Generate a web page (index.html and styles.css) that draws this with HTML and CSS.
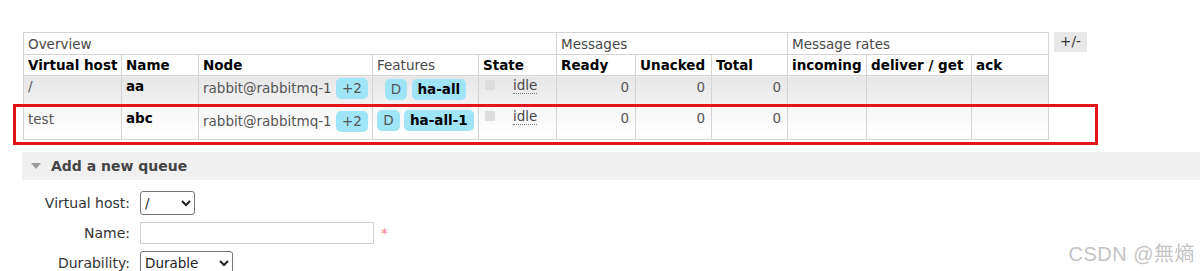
FILE: index.html
```html
<!DOCTYPE html>
<html lang="en">
<head>
    <meta charset="UTF-8">
    <title>Queues</title>
    <link rel="stylesheet" href="styles.css">
</head>
<body>
    <div class="list-wrap">
        <table class="list">
            <colgroup>
                <col style="width:98px"><col style="width:77px"><col style="width:174px">
                <col style="width:106px"><col style="width:78px"><col style="width:79px">
                <col style="width:76px"><col style="width:76px"><col style="width:79px">
                <col style="width:105px"><col style="width:77px">
            </colgroup>
            <thead>
                <tr class="group">
                    <th colspan="5">Overview</th>
                    <th colspan="3">Messages</th>
                    <th colspan="3">Message rates</th>
                </tr>
                <tr class="cols">
                    <th>Virtual host</th>
                    <th>Name</th>
                    <th>Node</th>
                    <th class="plain">Features</th>
                    <th>State</th>
                    <th>Ready</th>
                    <th>Unacked</th>
                    <th>Total</th>
                    <th>incoming</th>
                    <th>deliver / get</th>
                    <th>ack</th>
                </tr>
            </thead>
            <tbody>
                <tr class="alt1">
                    <td class="muted">/</td>
                    <td class="qname">aa</td>
                    <td class="muted">rabbit@rabbitmq-1 <span class="badge">+2</span></td>
                    <td class="features"><span class="badge">D</span> <span class="badge policy">ha-all</span></td>
                    <td class="state"><span class="sq"></span><abbr>idle</abbr></td>
                    <td class="num">0</td>
                    <td class="num">0</td>
                    <td class="num">0</td>
                    <td></td>
                    <td></td>
                    <td></td>
                </tr>
                <tr class="alt2">
                    <td class="muted">test</td>
                    <td class="qname">abc</td>
                    <td class="muted">rabbit@rabbitmq-1 <span class="badge">+2</span></td>
                    <td class="features"><span class="badge">D</span> <span class="badge policy">ha-all-1</span></td>
                    <td class="state"><span class="sq"></span><abbr>idle</abbr></td>
                    <td class="num">0</td>
                    <td class="num">0</td>
                    <td class="num">0</td>
                    <td></td>
                    <td></td>
                    <td></td>
                </tr>
            </tbody>
        </table>
        <span class="toggle">+/-</span>
        <div class="highlight"></div>
    </div>

    <div class="section">
        <h2><span class="arrow"></span>Add a new queue</h2>
        <div class="form">
            <div class="form-row">
                <label>Virtual host:</label>
                <select class="sel-vhost"><option>/</option></select>
            </div>
            <div class="form-row">
                <label>Name:</label>
                <input type="text" class="name-input">
                <span class="req">*</span>
            </div>
            <div class="form-row">
                <label>Durability:</label>
                <select class="sel-durable"><option>Durable</option></select>
            </div>
        </div>
    </div>

    <div class="watermark">CSDN @無熵</div>
</body>
</html>
```

FILE: styles.css
```css
body {
    margin: 0;
    font-family: "DejaVu Sans", Verdana, sans-serif;
    font-size: 13.5px;
    color: #484848;
    background: #fff;
    height: 271px;
    overflow: hidden;
    position: relative;
}
.list-wrap {
    position: relative;
    display: flex;
    align-items: flex-start;
    gap: 5px;
    padding: 32px 0 0 23px;
}
.list {
    border-collapse: collapse;
    table-layout: fixed;
    width: 1026px;
}
.list th, .list td {
    border: 1px solid #d4d4d4;
    padding: 0 4px;
    text-align: left;
    white-space: nowrap;
    overflow: hidden;
}
.list .group th {
    font-weight: normal;
    height: 21px;
    color: #484848;
}
.list .cols th {
    font-weight: bold;
    color: #000;
    height: 20px;
}
.list .cols th.plain {
    font-weight: normal;
    color: #484848;
}
.list td {
    vertical-align: top;
    padding-top: 3px;
}
.alt1 td {
    height: 27px;
    background: linear-gradient(#e6e6e6, #f3f3f3);
}
.alt2 td {
    height: 28px;
    background: linear-gradient(#f6f6f6, #fff);
}
.muted {
    color: #555;
}
.list td.muted {
    padding-top: 4px;
}
.alt1 td.muted, .alt1 td.qname {
    padding-top: 2px;
}
.qname {
    font-weight: bold;
    color: #000;
}
.badge {
    display: inline-block;
    background: #a0e4f8;
    border-radius: 5px;
    padding: 2px 6px;
    line-height: 17px;
    color: #555;
}
.badge.policy {
    font-weight: bold;
    color: #000;
    padding: 2px 6px;
}
.list td.features {
    text-align: center;
    padding-left: 0;
    padding-right: 0;
}
.list td.state {
    padding-top: 1px;
}
.sq {
    display: inline-block;
    width: 10px;
    height: 10px;
    background: #ddd;
    margin: 0 18px 0 2px;
    vertical-align: top;
    margin-top: 3px;
}
abbr {
    text-decoration: none;
    border-bottom: 1px dotted #777;
}
.list td.num {
    text-align: right;
    color: #555;
    padding-right: 6px;
}
.toggle {
    background: #e8e8e8;
    color: #333;
    padding: 1px 6px 3px;
    line-height: 16px;
}
.highlight {
    position: absolute;
    left: 13px;
    top: 104px;
    width: 1079px;
    height: 35px;
    border: 3px solid #e4141b;
}
.section {
    margin-top: 12px;
    padding-left: 22px;
}
.section h2 {
    margin: 0;
    background: #f0f0f0;
    font-size: 14px;
    color: #444;
    height: 28px;
    line-height: 28px;
    display: flex;
    align-items: center;
}
.arrow {
    width: 0;
    height: 0;
    border-left: 5px solid transparent;
    border-right: 5px solid transparent;
    border-top: 6px solid #999;
    margin: 0 10px 0 9px;
}
.form {
    padding-top: 8px;
}
.form-row {
    display: flex;
    align-items: center;
    height: 30px;
}
.form-row label {
    width: 108px;
    text-align: right;
    padding-right: 10px;
    color: #333;
    font-size: 14px;
}
select {
    font-family: "DejaVu Sans", Verdana, sans-serif;
    font-size: 13.5px;
    height: 24px;
    border: 1px solid #767676;
    border-radius: 3px;
    background: #fff;
    color: #222;
}
.sel-vhost {
    width: 55px;
}
.sel-durable {
    width: 93px;
}
.name-input {
    width: 228px;
    height: 20px;
    border: 1px solid #d0d0d0;
    padding: 0 2px;
}
.req {
    color: #f08080;
    margin-left: 7px;
}
.watermark {
    position: absolute;
    right: 5px;
    top: 238px;
    font-family: "Liberation Sans", "Noto Sans CJK SC", sans-serif;
    font-size: 20px;
    letter-spacing: 0.5px;
    color: #c4c4c4;
}
```
